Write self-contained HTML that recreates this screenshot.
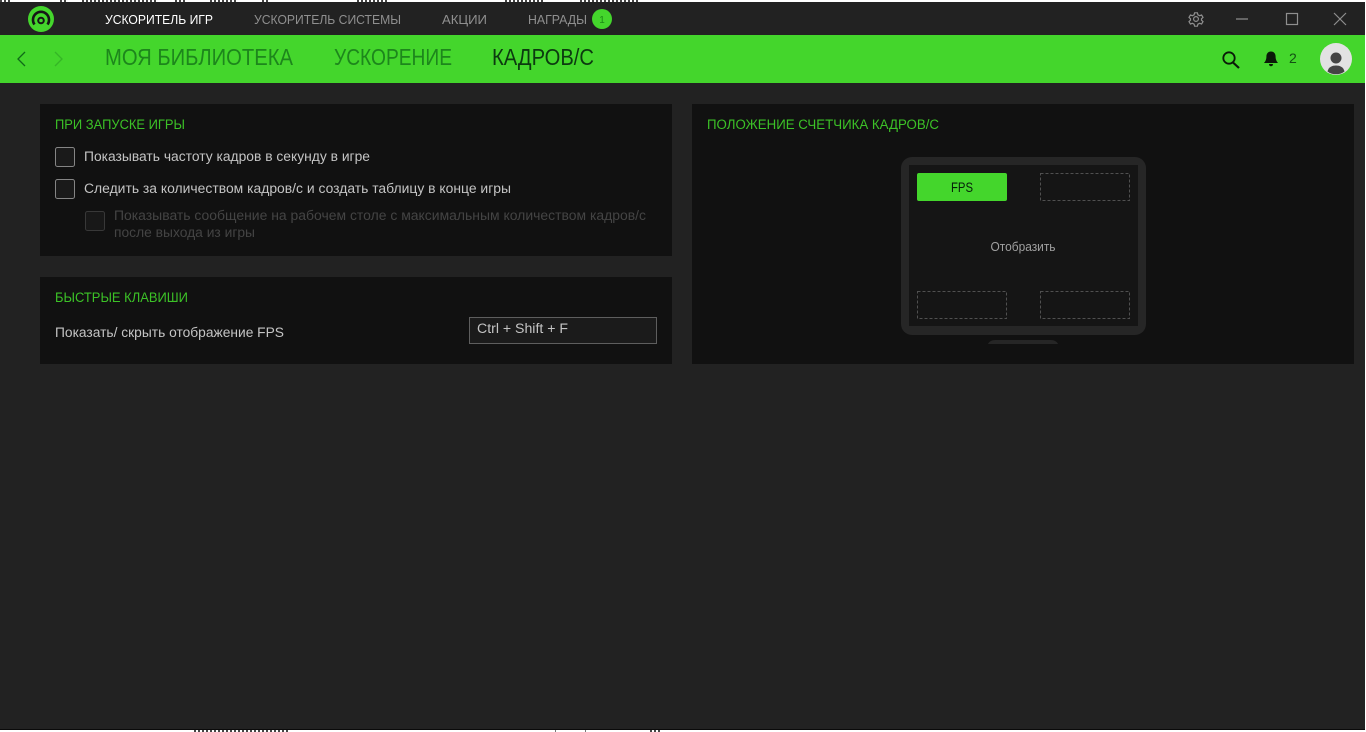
<!DOCTYPE html>
<html lang="ru"><head><meta charset="utf-8"><title>Кадров/с</title>
<style>
html,body{margin:0;padding:0;background:#fff;width:1366px;height:732px;overflow:hidden}
svg{display:block}
text{font-family:"Liberation Sans","DejaVu Sans",sans-serif}
</style></head><body>
<svg width="1366" height="732" viewBox="0 0 1366 732" xmlns="http://www.w3.org/2000/svg">
<rect width="1366" height="732" fill="#fff"/>
<!-- fragments of window behind -->
<g fill="none" stroke="#444" stroke-width="2" stroke-dasharray="2 2">
<path d="M0 1h12M60 1h8M82 1h76M175 1h10M210 1h26M262 1h8M357 1h30M505 1h40M580 1h60"/>
<path d="M194 731h96M650 731h10"/>
</g>
<rect x="555" y="730" width="1" height="2" fill="#777"/><rect x="585" y="730" width="1" height="2" fill="#777"/>
<rect x="0" y="2" width="1365" height="727" fill="#222"/>
<rect x="0" y="729" width="1365" height="1" fill="#0a0a0a"/>
<!-- green nav -->
<rect x="0" y="35" width="1365" height="48" fill="#44d62c"/>
<!-- logo -->
<circle cx="41" cy="19" r="13" fill="#44d62c"/>
<path d="M34.500 24.500 A8 8 0 1 1 47.500 24.500" fill="none" stroke="#161616" stroke-width="2.600"/>
<circle cx="41" cy="20.500" r="2.800" fill="none" stroke="#161616" stroke-width="2"/>
<!-- top tabs -->
<text x="105" y="24" font-size="13" fill="#fff" textLength="108" lengthAdjust="spacingAndGlyphs">УСКОРИТЕЛЬ ИГР</text>
<text x="254" y="24" font-size="13" fill="#8f8f8f" textLength="147" lengthAdjust="spacingAndGlyphs">УСКОРИТЕЛЬ СИСТЕМЫ</text>
<text x="442" y="24" font-size="13" fill="#8f8f8f" textLength="45" lengthAdjust="spacingAndGlyphs">АКЦИИ</text>
<text x="528" y="24" font-size="13" fill="#8f8f8f" textLength="59" lengthAdjust="spacingAndGlyphs">НАГРАДЫ</text>
<circle cx="602" cy="19" r="10" fill="#44d62c"/>
<text x="602" y="23" font-size="10" fill="#1c8a16" text-anchor="middle">1</text>
<!-- window controls -->
<g fill="none" stroke="#8f8f8f" stroke-width="1.200">
<circle cx="1196" cy="19" r="2.400"/>
<path d="M1194.600 12.800h2.800l.5 2 1.700.9 2-.7 1.400 2.400-1.500 1.400v1.400l1.500 1.400-1.400 2.400-2-.7-1.700.9-.5 2h-2.800l-.5-2-1.700-.9-2 .7-1.400-2.400 1.500-1.400v-1.400l-1.500-1.400 1.400-2.400 2 .7 1.700-.9z"/>
<path d="M1236 19h12"/>
<rect x="1286.500" y="13.500" width="11" height="11"/>
<path d="M1334 13l12 12M1346 13l-12 12"/>
</g>
<!-- nav -->
<path d="M25 52l-7 7 7 7" fill="none" stroke="#0f6b18" stroke-width="1.300"/>
<path d="M55 52l7 7-7 7" fill="none" stroke="#35b526" stroke-width="1.300"/>
<text x="105" y="65" font-size="23" fill="#1d861c" textLength="188" lengthAdjust="spacingAndGlyphs">МОЯ БИБЛИОТЕКА</text>
<text x="334" y="65" font-size="23" fill="#1d861c" textLength="118" lengthAdjust="spacingAndGlyphs">УСКОРЕНИЕ</text>
<text x="492" y="65" font-size="23" fill="#0c3a10" textLength="102" lengthAdjust="spacingAndGlyphs">КАДРОВ/С</text>
<!-- search -->
<circle cx="1229" cy="58" r="5.700" fill="none" stroke="#0a1a08" stroke-width="1.800"/>
<path d="M1233 62.500l6 5.500" stroke="#0a1a08" stroke-width="2.200" fill="none"/>
<!-- bell -->
<path d="M1271 51.500c3 0 4.600 2.200 4.600 5.200 0 3.200 1.400 5 2.400 6.300h-14c1-1.300 2.400-3.100 2.400-6.300 0-3 1.600-5.200 4.600-5.200z" fill="#0a1a08"/>
<path d="M1269 64h4c0 1.500-.9 2.300-2 2.300s-2-.8-2-2.300z" fill="#0a1a08"/>
<text x="1289" y="63" font-size="14" fill="#134f14">2</text>
<!-- avatar -->
<circle cx="1336" cy="59" r="16" fill="#e2e2e2"/>
<circle cx="1336" cy="58" r="5.500" fill="#444"/>
<path d="M1327.500 71.500c1-4.500 4.500-6 8.500-6s7.500 1.500 8.500 6c-2.400 2-5.300 2.800-8.500 2.800s-6.100-.8-8.500-2.800z" fill="#444"/>
<!-- panels -->
<rect x="40" y="104" width="632" height="152" fill="#111"/>
<rect x="40" y="277" width="632" height="87" fill="#111"/>
<rect x="692" y="104" width="662" height="260" fill="#111"/>
<!-- left panel -->
<text x="55" y="129" font-size="13.500" fill="#3cc227" textLength="130" lengthAdjust="spacingAndGlyphs">ПРИ ЗАПУСКЕ ИГРЫ</text>
<rect x="55.500" y="147.500" width="19" height="19" rx="2" fill="#1a1a1a" stroke="#858585"/>
<text x="84" y="161" font-size="13.500" fill="#c4c4c4" textLength="286" lengthAdjust="spacingAndGlyphs">Показывать частоту кадров в секунду в игре</text>
<rect x="55.500" y="179.500" width="19" height="19" rx="2" fill="#1a1a1a" stroke="#858585"/>
<text x="84" y="193" font-size="13.500" fill="#c4c4c4" textLength="427" lengthAdjust="spacingAndGlyphs">Следить за количеством кадров/с и создать таблицу в конце игры</text>
<rect x="85.500" y="211.500" width="19" height="19" rx="2" fill="#181818" stroke="#383838"/>
<text x="114" y="220" font-size="13.500" fill="#444" textLength="532" lengthAdjust="spacingAndGlyphs">Показывать сообщение на рабочем столе с максимальным количеством кадров/с</text>
<text x="114" y="237" font-size="13.500" fill="#444" textLength="141" lengthAdjust="spacingAndGlyphs">после выхода из игры</text>
<text x="55" y="302" font-size="13.500" fill="#3cc227" textLength="133" lengthAdjust="spacingAndGlyphs">БЫСТРЫЕ КЛАВИШИ</text>
<text x="55" y="337" font-size="13.500" fill="#c4c4c4" textLength="229" lengthAdjust="spacingAndGlyphs">Показать/ скрыть отображение FPS</text>
<rect x="469.500" y="317.500" width="187" height="26" fill="#1b1b1b" stroke="#5e5e5e"/>
<text x="477" y="333" font-size="13.500" fill="#c4c4c4" textLength="91" lengthAdjust="spacingAndGlyphs">Ctrl + Shift + F</text>
<!-- right panel -->
<text x="707" y="129" font-size="13.500" fill="#3cc227" textLength="232" lengthAdjust="spacingAndGlyphs">ПОЛОЖЕНИЕ СЧЕТЧИКА КАДРОВ/С</text>
<rect x="901" y="157" width="245" height="178" rx="11" fill="#262626"/>
<rect x="909" y="165" width="229" height="161" fill="#151515"/>
<rect x="917" y="173" width="90" height="28" rx="2" fill="#44d62c"/>
<text x="962" y="192" font-size="13.500" fill="#06200a" text-anchor="middle" textLength="22" lengthAdjust="spacingAndGlyphs">FPS</text>
<g fill="none" stroke="#505050" stroke-dasharray="3 2">
<rect x="1040.500" y="173.500" width="89" height="27"/>
<rect x="917.500" y="291.500" width="89" height="27"/>
<rect x="1040.500" y="291.500" width="89" height="27"/>
</g>
<text x="1023" y="251" font-size="12.500" fill="#a0a0a0" text-anchor="middle" textLength="65" lengthAdjust="spacingAndGlyphs">Отобразить</text>
<path d="M988 344c1-2.500 4-4 7-4h56c3 0 6 1.500 7 4z" fill="#262626"/>
</svg>
</body></html>
